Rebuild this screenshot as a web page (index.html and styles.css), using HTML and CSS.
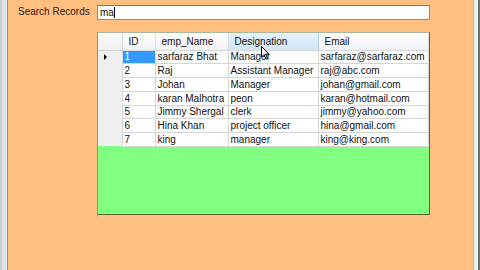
FILE: index.html
```html
<!DOCTYPE html>
<html lang="en">
<head>
    <meta charset="UTF-8">
    <meta name="viewport" content="width=device-width, initial-scale=1.0">
    <title>Search Records</title>
    <link rel="stylesheet" href="styles.css">
</head>
<body>
    <div class="screen">
        <div class="side-left"></div>
        <div class="form-area">
            <div class="search-row">
                <label for="search">Search Records</label>
                <div class="search-box">
                    <span id="search">ma</span><span class="caret"></span>
                </div>
            </div>
            <div class="grid-view">
                <table class="records">
                    <thead>
                        <tr>
                            <th class="row-head"></th>
                            <th class="col-id">ID</th>
                            <th class="col-name">emp_Name</th>
                            <th class="col-des hover">Designation</th>
                            <th class="col-mail">Email</th>
                        </tr>
                    </thead>
                    <tbody>
                        <tr>
                            <td class="row-head"><span class="arrow"></span></td>
                            <td class="selected">1</td>
                            <td>sarfaraz Bhat</td>
                            <td>Manager</td>
                            <td>sarfaraz@sarfaraz.com</td>
                        </tr>
                        <tr>
                            <td class="row-head"></td>
                            <td>2</td>
                            <td>Raj</td>
                            <td>Assistant Manager</td>
                            <td>raj@abc.com</td>
                        </tr>
                        <tr>
                            <td class="row-head"></td>
                            <td>3</td>
                            <td>Johan</td>
                            <td>Manager</td>
                            <td>johan@gmail.com</td>
                        </tr>
                        <tr>
                            <td class="row-head"></td>
                            <td>4</td>
                            <td>karan Malhotra</td>
                            <td>peon</td>
                            <td>karan@hotmail.com</td>
                        </tr>
                        <tr>
                            <td class="row-head"></td>
                            <td>5</td>
                            <td>Jimmy Shergal</td>
                            <td>clerk</td>
                            <td>jimmy@yahoo.com</td>
                        </tr>
                        <tr>
                            <td class="row-head"></td>
                            <td>6</td>
                            <td>Hina Khan</td>
                            <td>project officer</td>
                            <td>hina@gmail.com</td>
                        </tr>
                        <tr>
                            <td class="row-head"></td>
                            <td>7</td>
                            <td>king</td>
                            <td>manager</td>
                            <td>king@king.com</td>
                        </tr>
                    </tbody>
                </table>
                <svg class="pointer" width="9" height="14" viewBox="0 0 9 14">
                    <path d="M0.5 0.5 L0.5 11 L3 8.5 L5 13 L6.5 12.3 L4.6 8 L8 8 Z" fill="#fff" stroke="#000" stroke-width="1"/>
                </svg>
            </div>
        </div>
        <div class="side-right"></div>
    </div>
</body>
</html>
```

FILE: styles.css
```css
* {
    margin: 0;
    padding: 0;
    box-sizing: border-box;
}

body {
    width: 480px;
    height: 270px;
    overflow: hidden;
    font-family: "Liberation Sans", Arial, sans-serif;
    font-size: 10px;
    color: #111;
}

.screen {
    display: flex;
    height: 270px;
}

.side-left {
    width: 8px;
    background-color: #dfe4ea;
    border-left: 2px solid #c9ced6;
    border-right: 1px solid #8c939c;
}

.side-right {
    width: 7px;
    background-color: #eceef0;
    border-left: 1px solid #a9aeb4;
    border-right: 2px solid #6b7078;
}

.form-area {
    flex: 1;
    background-color: #ffbf80;
    padding: 4px 0 0 10px;
}

.search-row {
    display: flex;
    align-items: center;
    height: 16px;
}

.search-row label {
    width: 79px;
    color: #2a2016;
    position: relative;
    top: -1px;
}

.search-box {
    width: 333px;
    height: 15px;
    background-color: #fff;
    border: 1px solid #8e8e8e;
    border-top-color: #7a7a7a;
    padding: 0 2px;
    display: flex;
    align-items: center;
}

.caret {
    display: inline-block;
    width: 1px;
    height: 11px;
    background-color: #000;
}

.grid-view {
    position: relative;
    margin: 12px 0 0 79px;
    width: 333px;
    height: 183px;
    background-color: #80ff80;
    border: 1px solid #4d6b33;
    border-left-color: #8a9a7a;
    border-top-color: #a8b89a;
}

.records {
    border-collapse: collapse;
    table-layout: fixed;
    width: 330px;
}

.records th,
.records td {
    text-align: left;
    font-weight: normal;
    white-space: nowrap;
    overflow: hidden;
    padding: 0 0 0 2px;
}

.records th {
    height: 17px;
    background: linear-gradient(#ffffff, #f1f2f4);
    border-right: 1px solid #dde0e4;
    border-bottom: 1px solid #d4d7db;
    padding-left: 6px;
    padding-top: 1px;
}

.records th.hover {
    background: linear-gradient(#e6f2fb, #cfe6f7);
    border-right-color: #a9cde8;
}

.records td {
    height: 13.75px;
    background-color: #fff;
    border: 1px solid #d6d6d6;
    line-height: 11px;
}

.records .row-head {
    background: #f0f0f0;
    border: none;
    border-right: 1px solid #d6d6d6;
}

.records th.row-head {
    background: linear-gradient(#fafafa, #f0f0f0);
    border-bottom: 1px solid #d4d7db;
}

.col-id { width: 33px; }
.records th.row-head { width: 24px; }
.col-name { width: 73px; }
.col-des { width: 90px; }
.col-mail { width: 110px; }

.records td.selected {
    background-color: #3399ff;
    color: #fff;
    border: 1px dotted #d6d6d6;
}

.arrow {
    display: block;
    width: 0;
    height: 0;
    margin-left: 4px;
    border-top: 3px solid transparent;
    border-bottom: 3px solid transparent;
    border-left: 3px solid #000;
}

.pointer {
    position: absolute;
    left: 163px;
    top: 13px;
}
```
